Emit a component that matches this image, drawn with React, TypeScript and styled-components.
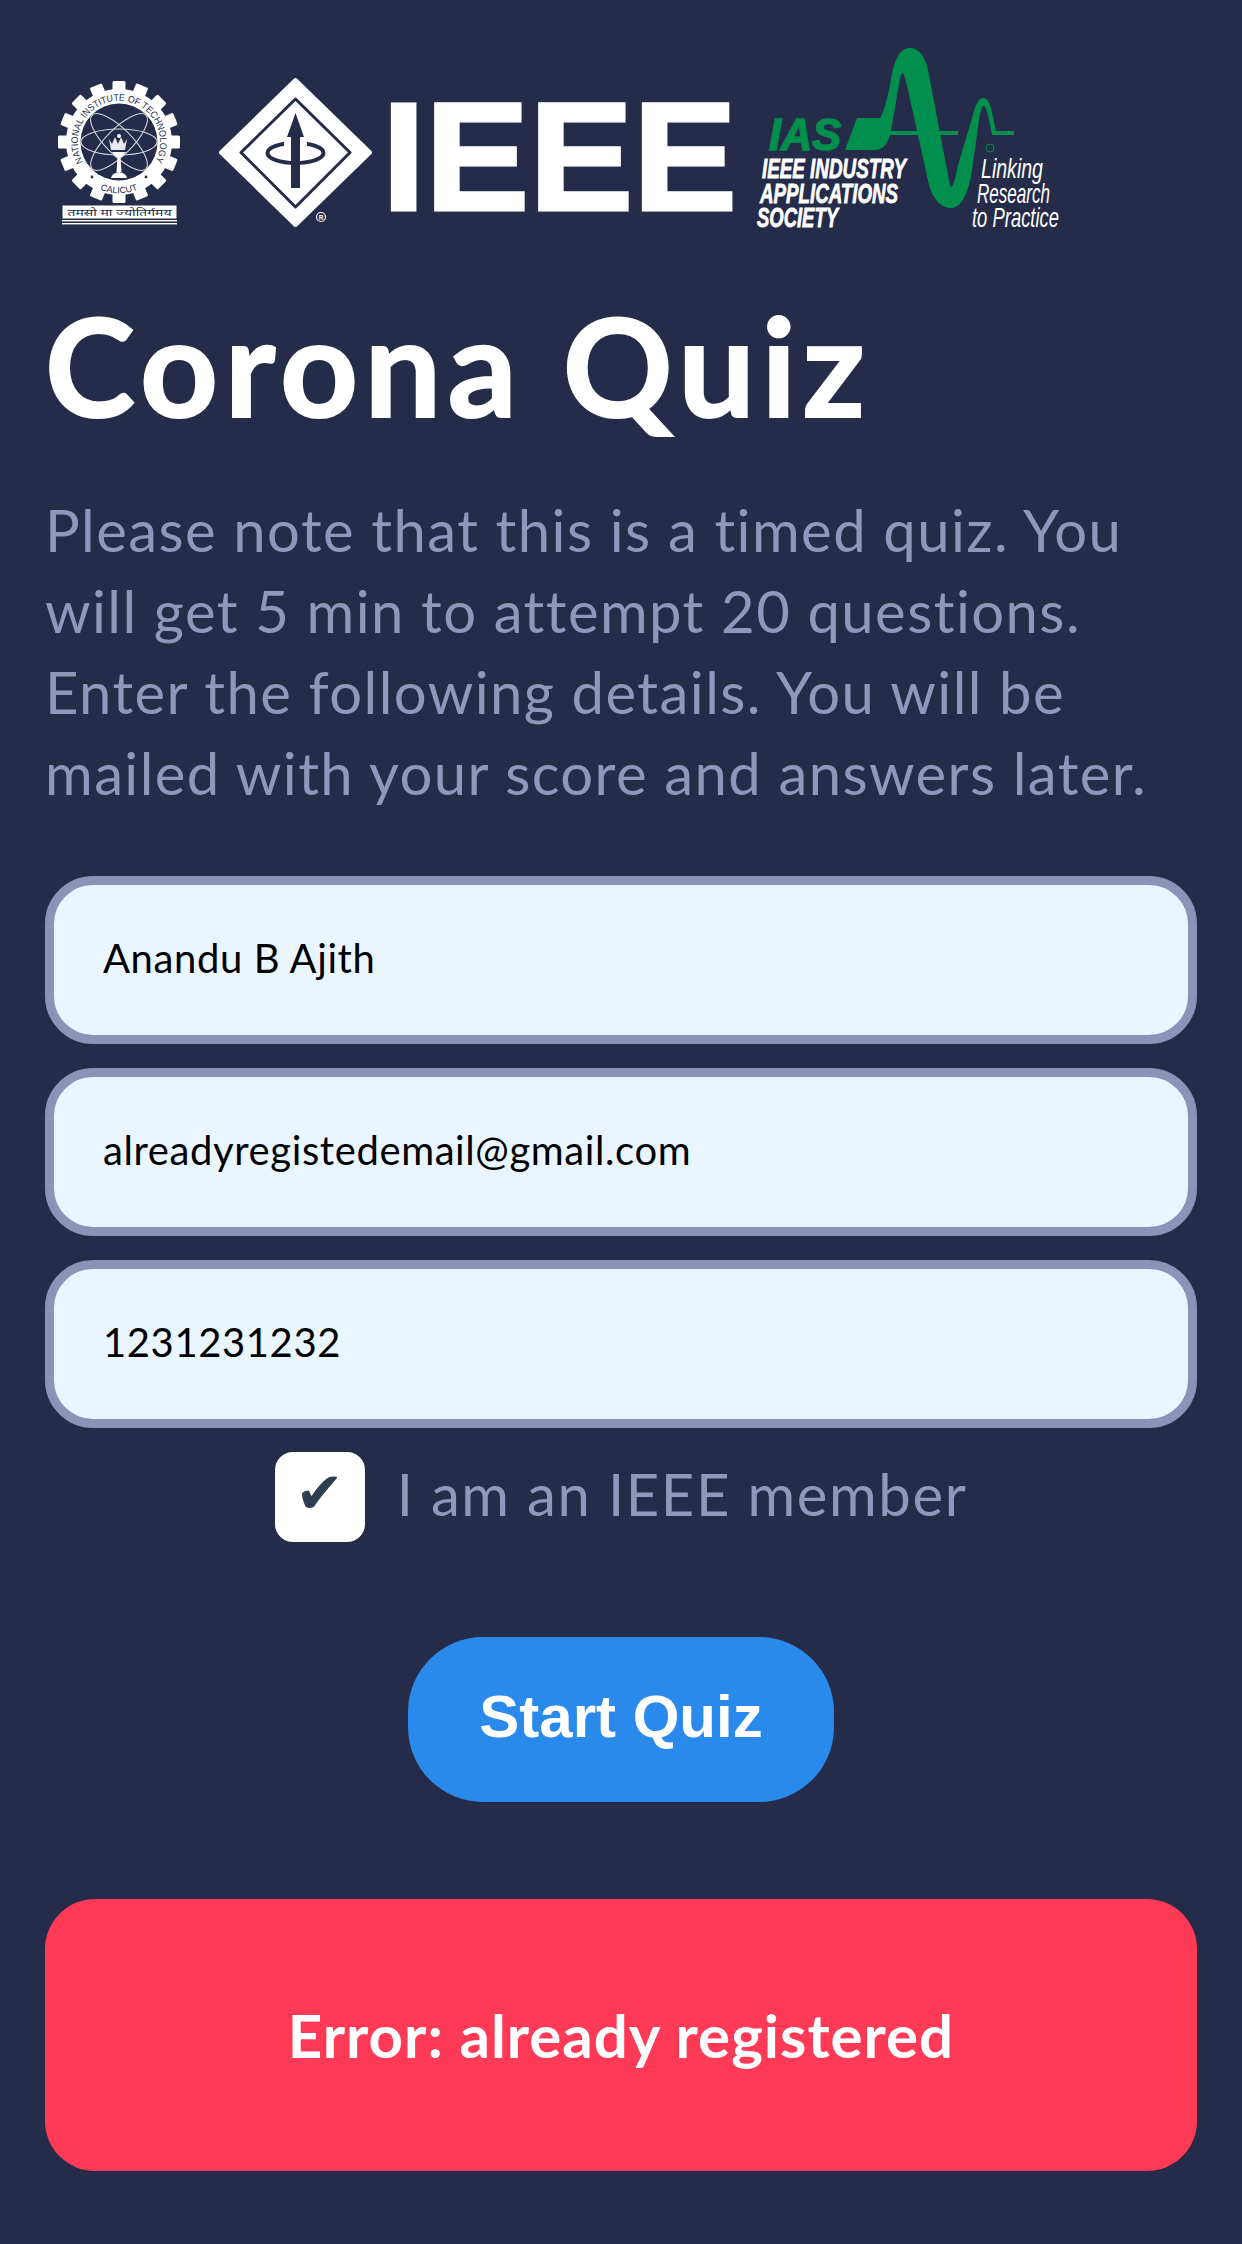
import React from "react";
import styled, { createGlobalStyle } from "styled-components";

const Global = createGlobalStyle`
  html, body { margin: 0; padding: 0; background: #252c4a; }
  * { box-sizing: border-box; }
`;

const Page = styled.main`
  width: 1242px;
  height: 2244px;
  padding: 48px 45px 0;
  background: #252c4a;
  font-family: "Lato", "Noto Sans", sans-serif;
  overflow: hidden;
`;

const LogoRow = styled.div`
  display: flex;
  height: 180px;
`;

const Title = styled.h1`
  margin: 0;
  height: 261px;
  padding-top: 37px;
  font-size: 136px;
  line-height: 200px;
  letter-spacing: 6.5px;
  font-weight: 700;
  -webkit-text-stroke: 2px #fff;
  color: #fff;
  white-space: nowrap;
`;

const Intro = styled.p`
  margin: 0 0 63px;
  font-size: 58px;
  line-height: 81px;
  letter-spacing: 1.42px;
  font-weight: 400;
  color: #8e97bc;
  white-space: nowrap;
`;

const Form = styled.form`
  display: flex;
  flex-direction: column;
  margin: 0;
`;

const Field = styled.input`
  display: block;
  width: 1152px;
  height: 168px;
  margin-bottom: 24px;
  padding: 0 0 5px 49px;
  border: 9px solid #8a93b8;
  border-radius: 48px;
  outline: none;
  background: #eaf6ff;
  color: #000;
  font-family: inherit;
  font-size: 40px;
  letter-spacing: 0.6px;
`;

const CheckRow = styled.label`
  display: flex;
  align-items: center;
  justify-content: center;
  gap: 32px;
  height: 90px;
`;

const CheckBox = styled.span`
  display: flex;
  align-items: flex-start;
  justify-content: center;
  width: 90px;
  height: 90px;
  border-radius: 18px;
  background: #fff;
  color: #2c3e50;
  font-family: "DejaVu Sans", sans-serif;
  font-size: 58px;
  line-height: 82px;
`;

const CheckLabel = styled.span`
  padding-bottom: 8px;
  font-size: 58px;
  letter-spacing: 1.6px;
  color: #8e97bc;
`;

const StartButton = styled.button`
  display: block;
  align-self: center;
  width: 426px;
  height: 165px;
  margin-top: 95px;
  padding: 0 0 6px;
  border: none;
  border-radius: 75px;
  background: #2a8aeb;
  color: #fff;
  font-family: "Liberation Sans", Arial, sans-serif;
  font-weight: 700;
  font-size: 60px;
`;

const ErrorBox = styled.div`
  display: flex;
  align-items: center;
  justify-content: center;
  width: 1152px;
  height: 272px;
  margin-top: 97px;
  border-radius: 50px;
  background: #ff3a56;
  color: #fff;
  font-size: 60px;
  letter-spacing: 1px;
  font-weight: 700;
`;

const WHITE = "#fff";
const BG = "#252c4a";
const GREEN = "#008f4c";

const NitLogo = () => {
  const cx = 119;
  const cy = 142;
  const teeth = Array.from({ length: 16 }, (_, i) => (i * 360) / 16);
  return (
    <svg width={160} height={180} viewBox="45 48 160 180" style={{ flex: "none" }}>
      {teeth.map((a) => (
        <rect key={a} x={cx - 6.5} y={cy - 61} width={13} height={16} rx={1.5} fill={WHITE} transform={`rotate(${a} ${cx} ${cy})`} />
      ))}
      <circle cx={cx} cy={cy} r={53} fill={WHITE} />
      <circle cx={cx} cy={cy} r={38.5} fill={BG} />
      <defs>
        <path id="ringTop" d={`M ${cx - 36} ${cy + 20} A 41.2 41.2 0 1 1 ${cx + 36} ${cy + 20}`} />
        <path id="ringBottom" d={`M ${cx - 44} ${cy + 26} A 51 51 0 0 0 ${cx + 44} ${cy + 26}`} />
      </defs>
      <text fontFamily="Liberation Sans, sans-serif" fontSize={9.5} fill={BG}>
        <textPath href="#ringTop" textLength={170} lengthAdjust="spacingAndGlyphs">NATIONAL INSTITUTE OF TECHNOLOGY</textPath>
      </text>
      <text fontFamily="Liberation Sans, sans-serif" fontSize={9} fill={BG} textAnchor="middle">
        <textPath href="#ringBottom" startOffset="50%">CALICUT</textPath>
      </text>
      <circle cx={92} cy={177} r={1.4} fill={BG} />
      <circle cx={146} cy={177} r={1.4} fill={BG} />
      <g fill="none" stroke={WHITE} strokeWidth={1.1} opacity={0.8}>
        <ellipse cx={cx} cy={cy} rx={38} ry={13} />
        <ellipse cx={cx} cy={cy} rx={38} ry={13} transform={`rotate(45 ${cx} ${cy})`} />
        <ellipse cx={cx} cy={cy} rx={38} ry={13} transform={`rotate(-45 ${cx} ${cy})`} />
      </g>
      <path d="M110 139 l3 5 3-7 3 7 3-7 3 7 3-5 -2 11 h-14 z" fill={WHITE} opacity={0.9} transform="translate(-1 0)" />
      <circle cx={119} cy={136} r={2} fill={WHITE} />
      <path d="M112 152 h14 l-4 5 h-6 z M117.5 157 h3 l1 15 h-5 z M111 178 q1-5 8-6 q7 1 8 6 z" fill={WHITE} />
      <rect x={62.5} y={205.5} width={114} height={13} fill={WHITE} />
      <text x={119.5} y={216} textAnchor="middle" fontFamily="Noto Sans, DejaVu Sans, sans-serif" fontSize={9} fill={BG} textLength={104} lengthAdjust="spacingAndGlyphs">तमसो मा ज्योतिर्गमय</text>
      <rect x={62} y={220} width={115} height={1.4} fill={WHITE} />
      <rect x={62} y={223} width={115} height={1.4} fill={WHITE} />
    </svg>
  );
};

const IeeeLogo = () => (
  <svg width={540} height={180} viewBox="205 48 540 180" style={{ flex: "none" }}>
    <path d="M295.5 80 L370 152.5 L295.5 225 L221 152.5 Z" fill={WHITE} stroke={WHITE} strokeWidth={4} strokeLinejoin="round" />
    <path d="M295.5 99 L350 152.5 L295.5 207 L241 152.5 Z" fill="none" stroke={BG} strokeWidth={3} strokeLinejoin="round" />
    <ellipse cx={295.5} cy={153} rx={28} ry={10} fill="none" stroke={BG} strokeWidth={4} />
    <rect x={284} y={138} width={23} height={12} fill={WHITE} />
    <path d="M295.5 113 L304 137 L300 137 L300 188 L291 188 L291 137 L287 137 Z" fill={BG} />
    <circle cx={321} cy={217} r={4.5} fill="none" stroke={WHITE} strokeWidth={1.2} />
    <text x={321} y={219.5} textAnchor="middle" fontSize={6.5} fontWeight={700} fontFamily="Liberation Sans, sans-serif" fill={WHITE}>R</text>
    <text x={382} y={210} fontFamily="Liberation Sans, Arial, sans-serif" fontWeight={700} fontSize={154} fill={WHITE} stroke={WHITE} strokeWidth={3} textLength={355} lengthAdjust="spacingAndGlyphs">IEEE</text>
  </svg>
);

const IasLogo = () => (
  <svg width={320} height={180} viewBox="745 48 320 180" style={{ flex: "none" }}>
    <path
      d="M857 118 L880 118 C884 112 887 100 891 80 C894 60 900 48 909.5 48 C919 48 925 56 928 70 L947 170 C949 180 950 187 951 187 C953 187 955 180 958 165 L973 115 C976 103 979 98 983 98 C988 98 990 104 992 112 L996 131 L1014 131 L1014 135 L992 135 L988 115 C986 108 985 106 983.5 106 C982 106 981 110 979 120 L971 177 C966 198 960 208 951 208 C942 208 933 200 929 185 L908 90 C905 78 904 73 902.5 73 C901 73 900 78 898 90 L891 131 L958 131 L958 135 L890 135 C887 145 882 150 875 150 L845 150 Z"
      fill={GREEN}
    />
    <text x={769} y={150} fontFamily="Liberation Sans, sans-serif" fontStyle="italic" fontWeight={700} fontSize={44} fill={GREEN} stroke={GREEN} strokeWidth={1.5} textLength={72} lengthAdjust="spacingAndGlyphs">IAS</text>
    <g fontFamily="Liberation Sans, sans-serif" fontStyle="italic" fontWeight={700} fontSize={28} fill={WHITE} stroke={WHITE} strokeWidth={0.8}>
      <text x={762} y={178} textLength={144} lengthAdjust="spacingAndGlyphs">IEEE INDUSTRY</text>
      <text x={760} y={203} textLength={138} lengthAdjust="spacingAndGlyphs">APPLICATIONS</text>
      <text x={757} y={227} textLength={81} lengthAdjust="spacingAndGlyphs">SOCIETY</text>
    </g>
    <g fontFamily="Liberation Sans, sans-serif" fontStyle="italic" fontSize={27} fill={WHITE}>
      <text x={981} y={178} textLength={62} lengthAdjust="spacingAndGlyphs">Linking</text>
      <text x={977} y={203} textLength={73} lengthAdjust="spacingAndGlyphs">Research</text>
      <text x={972} y={227} textLength={87} lengthAdjust="spacingAndGlyphs">to Practice</text>
    </g>
    <circle cx={990} cy={148} r={4} fill="none" stroke={GREEN} strokeWidth={1} />
  </svg>
);

export default function App() {
  return (
    <Page>
      <Global />
      <LogoRow>
        <NitLogo />
        <IeeeLogo />
        <IasLogo />
      </LogoRow>
      <Title>Corona Quiz</Title>
      <Intro>
        Please note that this is a timed quiz. You
        <br />
        will get 5 min to attempt 20 questions.
        <br />
        Enter the following details. You will be
        <br />
        mailed with your score and answers later.
      </Intro>
      <Form>
        <Field readOnly value="Anandu B Ajith" />
        <Field readOnly value="alreadyregistedemail@gmail.com" />
        <Field readOnly value="1231231232" />
        <CheckRow>
          <CheckBox>✔</CheckBox>
          <CheckLabel>I am an IEEE member</CheckLabel>
        </CheckRow>
        <StartButton type="button">Start Quiz</StartButton>
      </Form>
      <ErrorBox>Error: already registered</ErrorBox>
    </Page>
  );
}
